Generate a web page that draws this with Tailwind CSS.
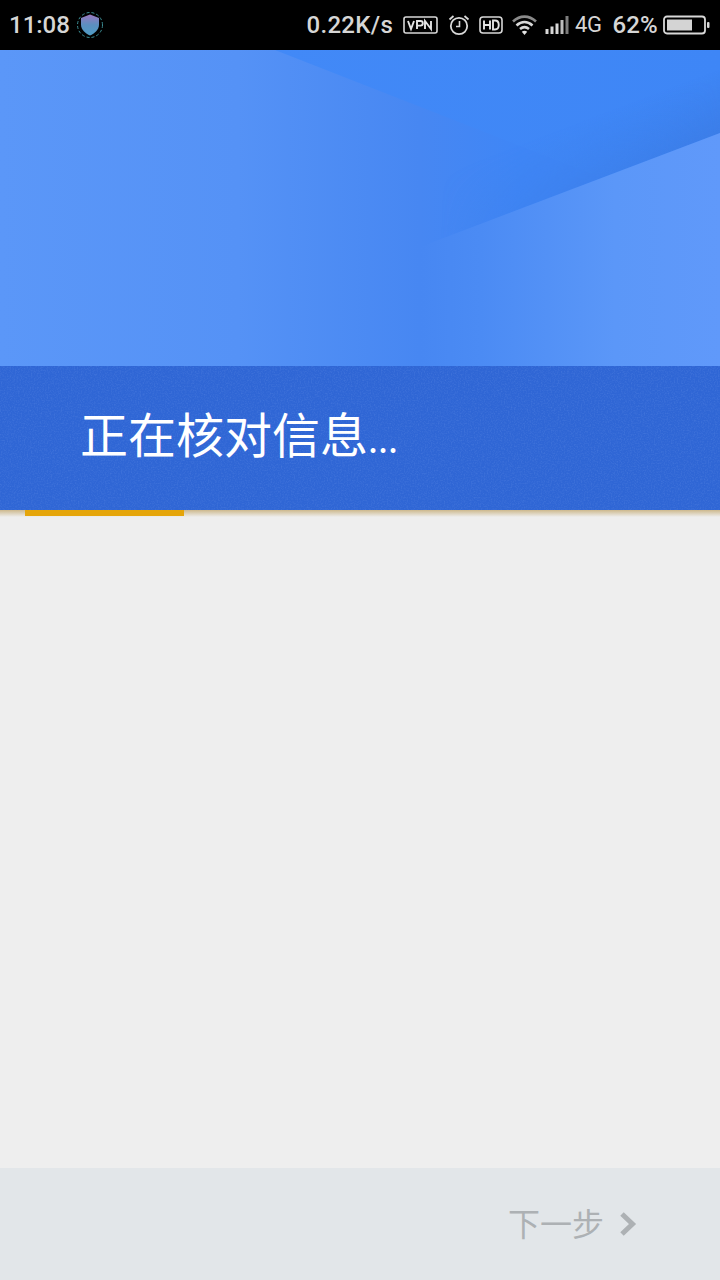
<!DOCTYPE html>
<html lang="zh">
<head>
<meta charset="utf-8">
<script src="https://cdn.jsdelivr.net/npm/@tailwindcss/browser@4"></script>
</head>
<body class="m-0 bg-[#eeeeee]">
<div class="w-[720px] h-[1280px] flex flex-col overflow-hidden font-['Roboto','Noto_Sans_CJK_SC',sans-serif]">
  <!-- status bar -->
  <div class="h-[50px] shrink-0 bg-black flex items-center text-[#d6d6d6] relative">
    <span class="ml-[9px] text-[24px] leading-none font-medium">11:08</span>
    <svg class="ml-[6px]" width="28" height="28" viewBox="0 0 28 28">
      <circle cx="14" cy="14" r="12.5" fill="none" stroke="#3d8f96" stroke-width="1" stroke-dasharray="3 2"/>
      <defs><linearGradient id="sh" x1="0" y1="0" x2="0" y2="1"><stop offset="0" stop-color="#9a78c0"/><stop offset="0.5" stop-color="#5b8fc0"/><stop offset="1" stop-color="#4f9cc4"/></linearGradient></defs>
      <path d="M14 3.5 L23 7 V13.5 C23 19 18.5 22.5 14 24.5 C9.5 22.5 5 19 5 13.5 V7 Z" fill="url(#sh)"/>
    </svg>
    <div class="ml-auto flex items-center h-full">
      <span class="text-[24px] leading-none font-medium tracking-[0.3px]">0.22K/s</span>
      <svg class="ml-[10px]" width="35" height="18" viewBox="0 0 35 18">
        <rect x="1" y="1" width="33" height="16" rx="2" fill="none" stroke="#d8d8d8" stroke-width="1.6"/>
        <path d="M5 5 L8 13 L11 5 M14 13 V5 H17.5 A2.3 2.3 0 0 1 17.5 9.6 H14 M22 13 V5 L28 13 V5" fill="none" stroke="#e4e4e4" stroke-width="1.9"/>
      </svg>
      <svg class="ml-[10px]" width="22" height="22" viewBox="0 0 22 22">
        <circle cx="11" cy="12" r="8.2" fill="none" stroke="#d8d8d8" stroke-width="1.8"/>
        <path d="M11.5 7 V12.5 H8" fill="none" stroke="#d8d8d8" stroke-width="1.6"/>
        <path d="M1.5 5.5 L5.5 2 M20.5 5.5 L16.5 2" stroke="#d8d8d8" stroke-width="1.8"/>
      </svg>
      <svg class="ml-[9px]" width="24" height="18" viewBox="0 0 24 18">
        <rect x="1" y="1" width="22" height="16" rx="3" fill="none" stroke="#d8d8d8" stroke-width="1.6"/>
        <path d="M5 4.5 V13.5 M11 4.5 V13.5 M5 9 H11" fill="none" stroke="#e4e4e4" stroke-width="1.9"/>
        <path d="M14 4.5 V13.5 H16 C21 13.5 21 4.5 16 4.5 Z" fill="none" stroke="#e4e4e4" stroke-width="1.9"/>
      </svg>
      <svg class="ml-[9px]" width="25" height="22" viewBox="0 0 25 22">
        <path d="M1 7.5 C8 1 17 1 24 7.5" fill="none" stroke="#8a8a8a" stroke-width="2.6"/>
        <path d="M4.5 11.5 C9.5 7 15.5 7 20.5 11.5" fill="none" stroke="#d8d8d8" stroke-width="2.6"/>
        <path d="M8 15 C11 12.5 14 12.5 17 15" fill="none" stroke="#d8d8d8" stroke-width="2.6"/>
        <path d="M12.5 21 L9.8 17.8 C11.5 16.5 13.5 16.5 15.2 17.8 Z" fill="#e4e4e4"/>
      </svg>
      <svg class="ml-[8px]" width="24" height="22" viewBox="0 0 24 22">
        <rect x="0.5" y="15" width="3" height="5" fill="#d8d8d8"/>
        <rect x="5.5" y="12.5" width="3" height="7.5" fill="#d8d8d8"/>
        <rect x="10.5" y="9.5" width="3" height="10.5" fill="#d8d8d8"/>
        <rect x="15.5" y="6" width="3" height="14" fill="#bdbdbd"/>
        <rect x="20.5" y="2" width="3" height="18" fill="#7d7d7d"/>
      </svg>
      <span class="ml-[6px] text-[22px] leading-none font-normal tracking-[-0.5px]">4G</span>
      <span class="ml-[11px] text-[24px] leading-none font-medium tracking-[0.2px]">62%</span>
      <svg class="ml-[5px] mr-[10px]" width="47" height="20" viewBox="0 0 47 20">
        <rect x="1" y="1.5" width="41" height="17" rx="3" fill="none" stroke="#d8d8d8" stroke-width="1.8"/>
        <rect x="4" y="4.5" width="25" height="11" fill="#d4d4d4"/>
        <rect x="44" y="7" width="2.5" height="6" rx="1" fill="#d8d8d8"/>
      </svg>
    </div>
  </div>

  <!-- hero artwork -->
  <svg class="block shrink-0" width="720" height="316" viewBox="0 0 720 316">
    <defs>
      <linearGradient id="base" gradientUnits="userSpaceOnUse" x1="0" y1="0" x2="720" y2="0">
        <stop offset="0" stop-color="#5b97f8"/>
        <stop offset="0.33" stop-color="#5592f6"/>
        <stop offset="0.583" stop-color="#4787f2"/>
        <stop offset="0.72" stop-color="#3f86f6"/>
        <stop offset="1" stop-color="#3f86f6"/>
      </linearGradient>
      <linearGradient id="top" gradientUnits="userSpaceOnUse" x1="275" y1="0" x2="720" y2="0">
        <stop offset="0" stop-color="#4289f7"/>
        <stop offset="1" stop-color="#3e86f6"/>
      </linearGradient>
      <linearGradient id="shade" gradientUnits="userSpaceOnUse" x1="699" y1="27" x2="720" y2="83">
        <stop offset="0" stop-color="#3a78df" stop-opacity="0"/>
        <stop offset="1" stop-color="#3a78df" stop-opacity="0.6"/>
      </linearGradient>
      <linearGradient id="fadeH" gradientUnits="userSpaceOnUse" x1="440" y1="0" x2="720" y2="0">
        <stop offset="0" stop-color="#fff" stop-opacity="0"/>
        <stop offset="1" stop-color="#fff" stop-opacity="1"/>
      </linearGradient>
      <mask id="shadeMask" maskUnits="userSpaceOnUse" x="0" y="0" width="720" height="316">
        <rect width="720" height="316" fill="url(#fadeH)"/>
      </mask>
      <linearGradient id="low" gradientUnits="userSpaceOnUse" x1="420" y1="0" x2="720" y2="0">
        <stop offset="0" stop-color="#4787f2"/>
        <stop offset="0.2" stop-color="#4b8bf4"/>
        <stop offset="0.65" stop-color="#5b97f8"/>
        <stop offset="1" stop-color="#6099fa"/>
      </linearGradient>
    </defs>
    <rect width="720" height="316" fill="url(#base)"/>
    <polygon points="275,0 720,0 720,83 602,128" fill="url(#top)"/>
    <polygon points="720,19 720,83 430,193 430,129" fill="url(#shade)" mask="url(#shadeMask)"/>
    <polygon points="720,83 420,197 420,316 720,316" fill="url(#low)"/>
  </svg>

  <!-- title band -->
  <div class="h-[144px] shrink-0 bg-[#2f66d5] flex items-start pl-[80px] pt-[34px] relative overflow-hidden">
    <svg class="absolute inset-0" width="720" height="144">
      <filter id="grain"><feTurbulence type="fractalNoise" baseFrequency="0.7" numOctaves="2" seed="4"/><feColorMatrix values="0 0 0 0 0.45  0 0 0 0 0.6  0 0 0 0 1  0 0 0 1.2 -0.5"/></filter>
      <rect width="720" height="144" filter="url(#grain)" opacity="0.22"/>
    </svg>
    <span class="relative text-[48px] leading-[64px] text-white font-['Noto_Sans_CJK_SC','Roboto',sans-serif] font-normal">正在核对信息<span class="text-[36px]">...</span></span>
  </div>

  <!-- body -->
  <div class="flex-1 relative bg-[#eeeeee]">
    <div class="absolute left-0 top-0 w-full h-[7px] bg-gradient-to-b from-[#cdb98d] to-[#eeeeee]"></div>
    <div class="absolute left-[25px] top-0 w-[159px] h-[6px] bg-[#e5a50a]"></div>
  </div>

  <!-- footer -->
  <div class="h-[112px] shrink-0 bg-[#e2e6e9] flex items-center justify-end pr-[83px]">
    <span class="text-[32px] leading-none text-[#adb1b4] font-['Noto_Sans_CJK_SC',sans-serif] mb-[4px]">下一步</span>
    <svg class="ml-[15px]" width="18" height="26" viewBox="0 0 18 26">
      <path d="M3 3 L13.5 13 L3 23" fill="none" stroke="#adb1b4" stroke-width="5"/>
    </svg>
  </div>
</div>
</body>
</html>
